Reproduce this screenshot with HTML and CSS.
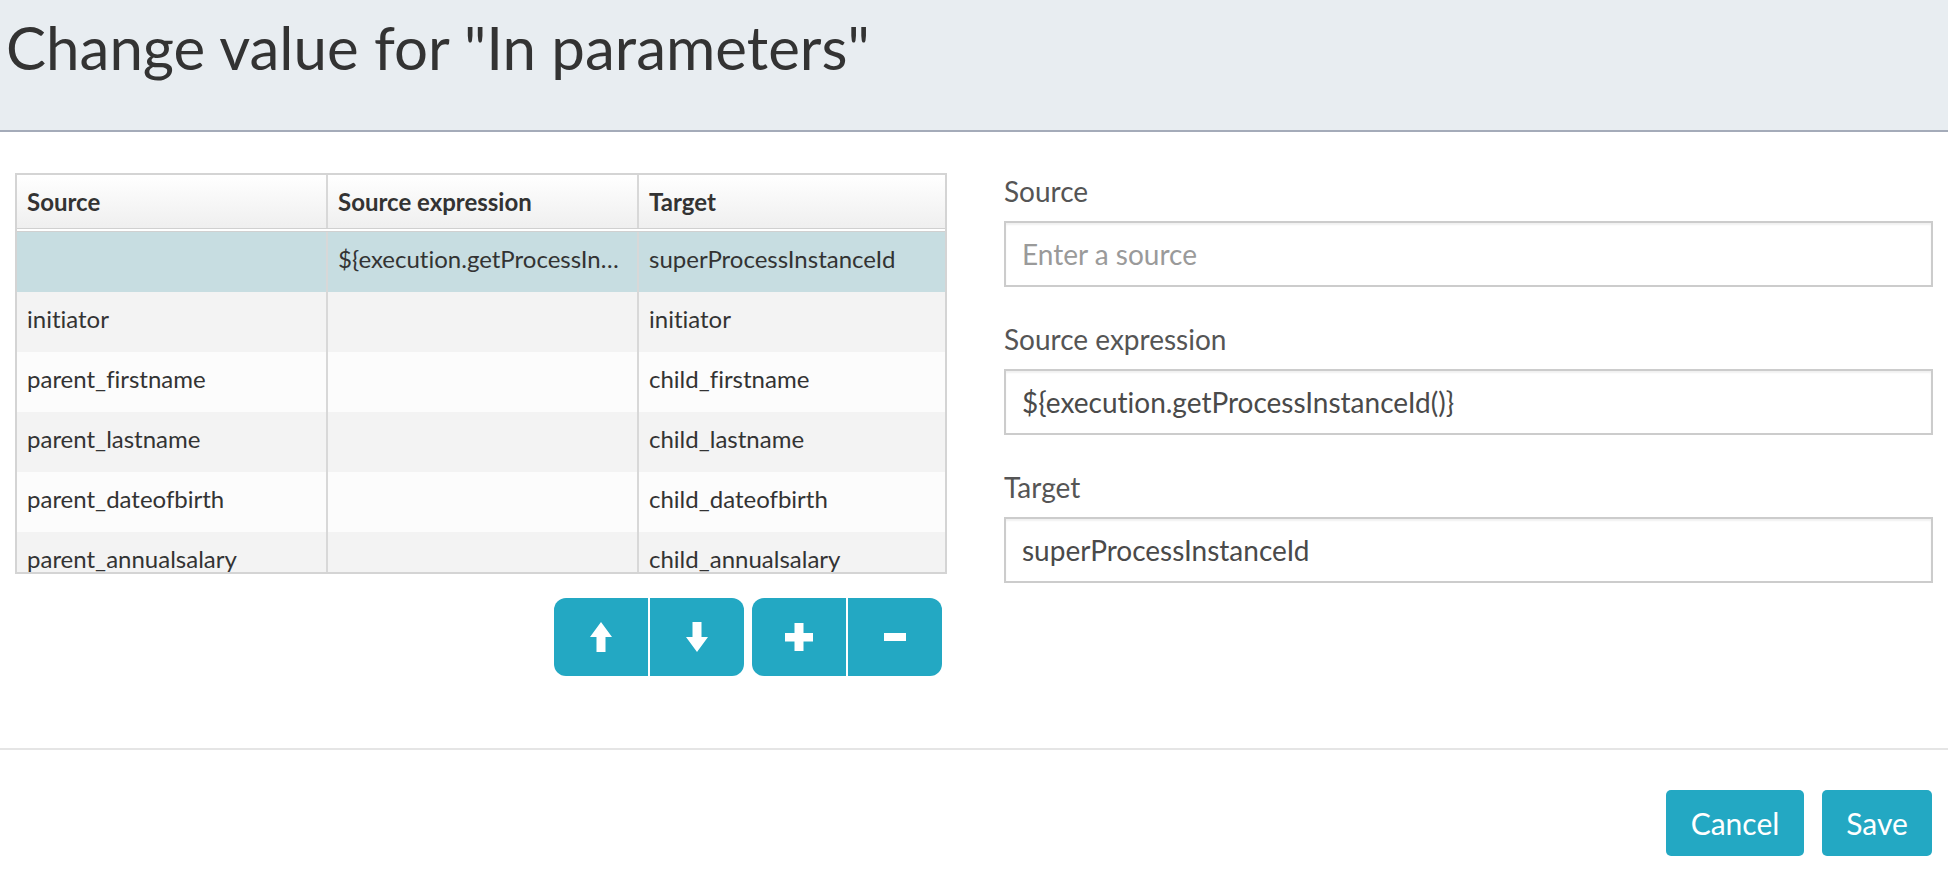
FILE: index.html
```html
<!DOCTYPE html>
<html>
<head>
<meta charset="utf-8">
<title>Change value</title>
<link rel="stylesheet" href="styles.css">
</head>
<body>
<div class="modal">
  <div class="modal-header">
    <span class="close">&times;</span>
    <h2 class="title">Change value for "In parameters"</h2>
  </div>
  <div class="modal-body">
    <div class="col-left">
      <div class="grid">
        <div class="grid-head">
          <div class="hcell">Source</div>
          <div class="hcell">Source expression</div>
          <div class="hcell">Target</div>
        </div>
        <div class="grid-body">
          <div class="row selected">
            <div class="cell"></div>
            <div class="cell">${execution.getProcessInstanceId()}</div>
            <div class="cell">superProcessInstanceId</div>
          </div>
          <div class="row odd">
            <div class="cell">initiator</div>
            <div class="cell"></div>
            <div class="cell">initiator</div>
          </div>
          <div class="row even">
            <div class="cell">parent_firstname</div>
            <div class="cell"></div>
            <div class="cell">child_firstname</div>
          </div>
          <div class="row odd">
            <div class="cell">parent_lastname</div>
            <div class="cell"></div>
            <div class="cell">child_lastname</div>
          </div>
          <div class="row even">
            <div class="cell">parent_dateofbirth</div>
            <div class="cell"></div>
            <div class="cell">child_dateofbirth</div>
          </div>
          <div class="row odd">
            <div class="cell">parent_annualsalary</div>
            <div class="cell"></div>
            <div class="cell">child_annualsalary</div>
          </div>
        </div>
      </div>
      <div class="toolbar">
        <div class="btn-group">
          <button class="btn icon-btn first" title="Move up">
            <svg width="22" height="30" viewBox="0 0 22 30"><polygon points="11,0 22,15 15.5,15 15.5,30 6.5,30 6.5,15 0,15" fill="#fff"/></svg>
          </button>
          <button class="btn icon-btn last" title="Move down">
            <svg width="22" height="30" viewBox="0 0 22 30"><polygon points="11,30 22,15 15.5,15 15.5,0 6.5,0 6.5,15 0,15" fill="#fff"/></svg>
          </button>
        </div>
        <div class="btn-group">
          <button class="btn icon-btn first" title="Add">
            <svg width="28" height="28" viewBox="0 0 28 28"><rect x="9.5" y="0" width="9" height="28" fill="#fff"/><rect x="0" y="10" width="28" height="8.5" fill="#fff"/></svg>
          </button>
          <button class="btn icon-btn last" title="Remove">
            <svg width="22" height="8" viewBox="0 0 22 8"><rect x="0" y="0" width="22" height="8" fill="#fff"/></svg>
          </button>
        </div>
      </div>
    </div>
    <div class="col-right">
      <div class="form-group">
        <label class="label">Source</label>
        <div class="input placeholder">Enter a source</div>
      </div>
      <div class="form-group">
        <label class="label">Source expression</label>
        <div class="input">${execution.getProcessInstanceId()}</div>
      </div>
      <div class="form-group">
        <label class="label">Target</label>
        <div class="input">superProcessInstanceId</div>
      </div>
    </div>
  </div>
  <div class="modal-footer">
    <button class="btn text-btn cancel">Cancel</button>
    <button class="btn text-btn save">Save</button>
  </div>
</div>
</body>
</html>
```

FILE: styles.css
```css
html, body {
  margin: 0;
  padding: 0;
  background: #fff;
}
body {
  font-family: Lato, "Open Sans", "Liberation Sans", sans-serif;
  font-variant-ligatures: no-common-ligatures;
  color: #333;
  width: 1948px;
  height: 878px;
  overflow: hidden;
}
.modal {
  display: flex;
  flex-direction: column;
  height: 878px;
}
.modal-header {
  position: relative;
  height: 130px;
  background: #e8edf1;
  border-bottom: 2px solid #a4abb9;
  box-sizing: content-box;
  overflow: hidden;
}
.close {
  position: absolute;
  right: 6px;
  top: -27px;
  font-size: 36px;
  color: #b5b9bf;
  line-height: 30px;
}
.title {
  margin: 0;
  padding: 7px 0 0 6px;
  font-size: 60px;
  font-weight: 400;
  line-height: 80px;
  color: #333;
}
.modal-body {
  display: grid;
  grid-template-columns: 932px 929px;
  column-gap: 57px;
  padding: 41px 15px 0 15px;
  height: 616px;
  box-sizing: border-box;
}
.grid {
  border: 2px solid #d4d4d4;
}
.grid-head {
  display: grid;
  grid-template-columns: 309px 311px 308px;
  height: 53px;
  background: linear-gradient(#ffffff, #efefef);
  border-bottom: 1px solid #d0d0d0;
}
.hcell {
  font-weight: 700;
  font-size: 24px;
  padding-left: 10px;
  display: flex;
  align-items: center;
  border-left: 2px solid #d8d8d8;
}
.hcell:first-child {
  border-left: none;
}
.grid-body {
  margin-top: 2px;
  border-top: 1px solid #d0d0d0;
  height: 340px;
  overflow: hidden;
}
.row {
  display: grid;
  grid-template-columns: 309px 311px 308px;
  height: 60px;
}
.row.selected { background: #c7dde1; }
.row.odd { background: #f3f3f3; }
.row.even { background: #fcfcfc; }
.cell {
  font-size: 24px;
  padding: 0 10px;
  line-height: 54px;
  white-space: nowrap;
  overflow: hidden;
  text-overflow: ellipsis;
  border-left: 2px solid #d8d8d8;
}
.cell:first-child {
  border-left: none;
}
.toolbar {
  display: flex;
  justify-content: flex-end;
  gap: 8px;
  margin-top: 24px;
  padding-right: 5px;
}
.btn-group {
  display: flex;
  gap: 2px;
}
.btn {
  border: none;
  background: #23a8c3;
  color: #fff;
  font-family: Lato, "Open Sans", "Liberation Sans", sans-serif;
  cursor: pointer;
  padding: 0;
  display: flex;
  align-items: center;
  justify-content: center;
}
.icon-btn {
  width: 94px;
  height: 78px;
}
.icon-btn.first { border-radius: 12px 0 0 12px; }
.icon-btn.last { border-radius: 0 12px 12px 0; }
.col-right {
  display: flex;
  flex-direction: column;
  padding-top: 4px;
}
.form-group {
  display: flex;
  flex-direction: column;
  margin-bottom: 38px;
}
.label {
  font-size: 28px;
  line-height: 29px;
  color: #555;
  margin-bottom: 15px;
}
.input {
  height: 62px;
  border: 2px solid #cccccc;
  box-shadow: inset 0 2px 2px rgba(0,0,0,0.06);
  font-size: 28px;
  line-height: 62px;
  padding: 0 16px;
  color: #4a4a4a;
  white-space: nowrap;
}
.input.placeholder {
  color: #9a9a9a;
}
.modal-footer {
  border-top: 2px solid #e5e5e5;
  display: flex;
  justify-content: flex-end;
  gap: 18px;
  padding: 40px 16px 0 0;
}
.text-btn {
  height: 66px;
  border-radius: 5px;
  font-size: 30px;
}
.cancel { width: 138px; }
.save { width: 110px; }
```
